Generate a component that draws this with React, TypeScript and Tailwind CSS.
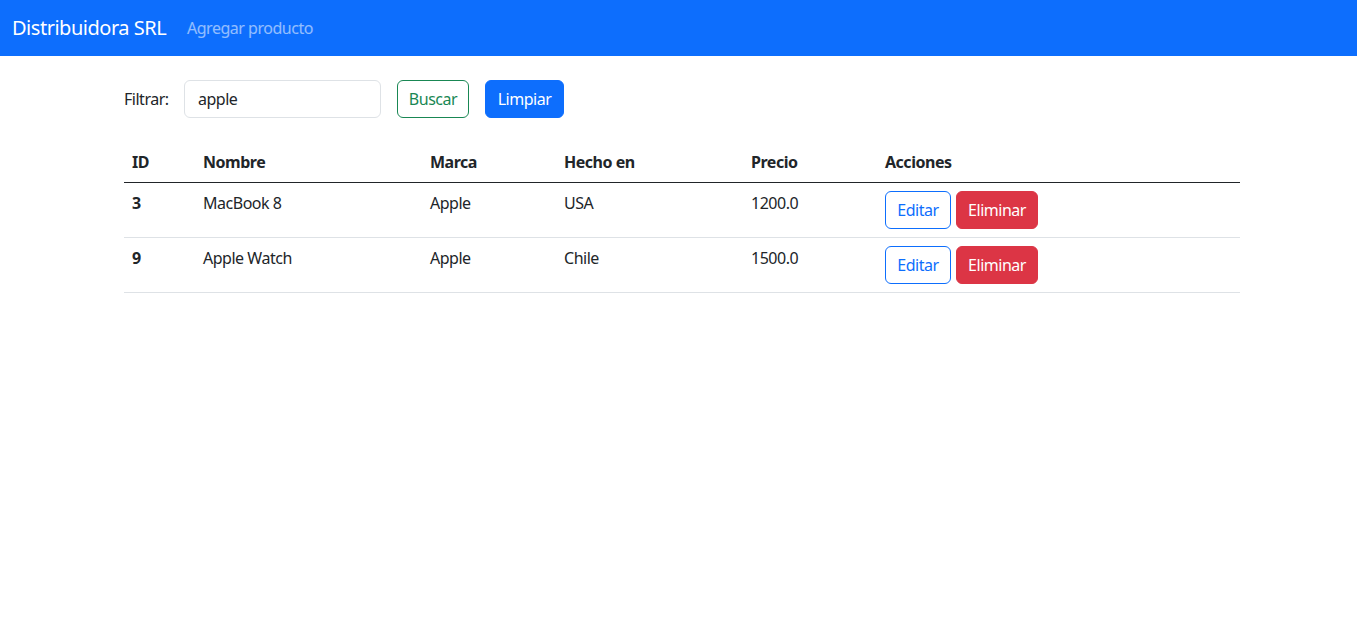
import { useState } from "react";

type Producto = {
  id: number;
  nombre: string;
  marca: string;
  hechoEn: string;
  precio: string;
};

const productos: Producto[] = [
  { id: 3, nombre: "MacBook 8", marca: "Apple", hechoEn: "USA", precio: "1200.0" },
  { id: 9, nombre: "Apple Watch", marca: "Apple", hechoEn: "Chile", precio: "1500.0" },
];

export default function App() {
  const [filtro, setFiltro] = useState("apple");

  return (
    <div className="min-h-screen bg-white text-[16px] leading-6 tracking-[-0.03em] text-[#212529] font-['Noto_Sans',sans-serif]">
      {/* Navbar */}
      <nav className="flex h-14 items-center bg-[#0d6efd] px-3">
        <span className="w-[167px] text-[20px] leading-[30px] text-white">
          Distribuidora SRL
        </span>
        <a className="px-2 text-white/55" href="#">
          Agregar producto
        </a>
      </nav>

      <div className="mx-[124px] w-[1116px]">
        {/* Filtro */}
        <div className="mt-6 flex items-center">
          <label className="w-[60px]">Filtrar:</label>
          <input
            value={filtro}
            onChange={(e) => setFiltro(e.target.value)}
            className="h-[38px] w-[197px] rounded-md border border-[#dee2e6] px-[13px] outline-none"
          />
          <button className="ml-4 h-[38px] w-[72px] rounded-md border border-[#198754] text-[#198754]">
            Buscar
          </button>
          <button className="ml-4 h-[38px] w-[79px] rounded-md border border-[#0d6efd] bg-[#0d6efd] text-white">
            Limpiar
          </button>
        </div>

        {/* Tabla */}
        <table className="mt-6 w-full table-fixed border-collapse text-left">
          <colgroup>
            <col className="w-[71px]" />
            <col className="w-[227px]" />
            <col className="w-[134px]" />
            <col className="w-[187px]" />
            <col className="w-[134px]" />
            <col />
          </colgroup>
          <thead>
            <tr className="border-b border-[#212529]">
              <th className="p-2 font-bold">ID</th>
              <th className="p-2 font-bold">Nombre</th>
              <th className="p-2 font-bold">Marca</th>
              <th className="p-2 font-bold">Hecho en</th>
              <th className="p-2 font-bold">Precio</th>
              <th className="p-2 font-bold">Acciones</th>
            </tr>
          </thead>
          <tbody>
            {productos.map((p) => (
              <tr key={p.id} className="border-b border-[#dee2e6]">
                <td className="p-2 align-top font-bold">{p.id}</td>
                <td className="p-2 align-top">{p.nombre}</td>
                <td className="p-2 align-top">{p.marca}</td>
                <td className="p-2 align-top">{p.hechoEn}</td>
                <td className="p-2 align-top">{p.precio}</td>
                <td className="p-2 align-top">
                  <div className="flex gap-[5px]">
                    <button className="h-[38px] w-[66px] rounded-md border border-[#0d6efd] text-[#0d6efd]">
                      Editar
                    </button>
                    <button className="h-[38px] w-[82px] rounded-md border border-[#dc3545] bg-[#dc3545] text-white">
                      Eliminar
                    </button>
                  </div>
                </td>
              </tr>
            ))}
          </tbody>
        </table>
      </div>
    </div>
  );
}
